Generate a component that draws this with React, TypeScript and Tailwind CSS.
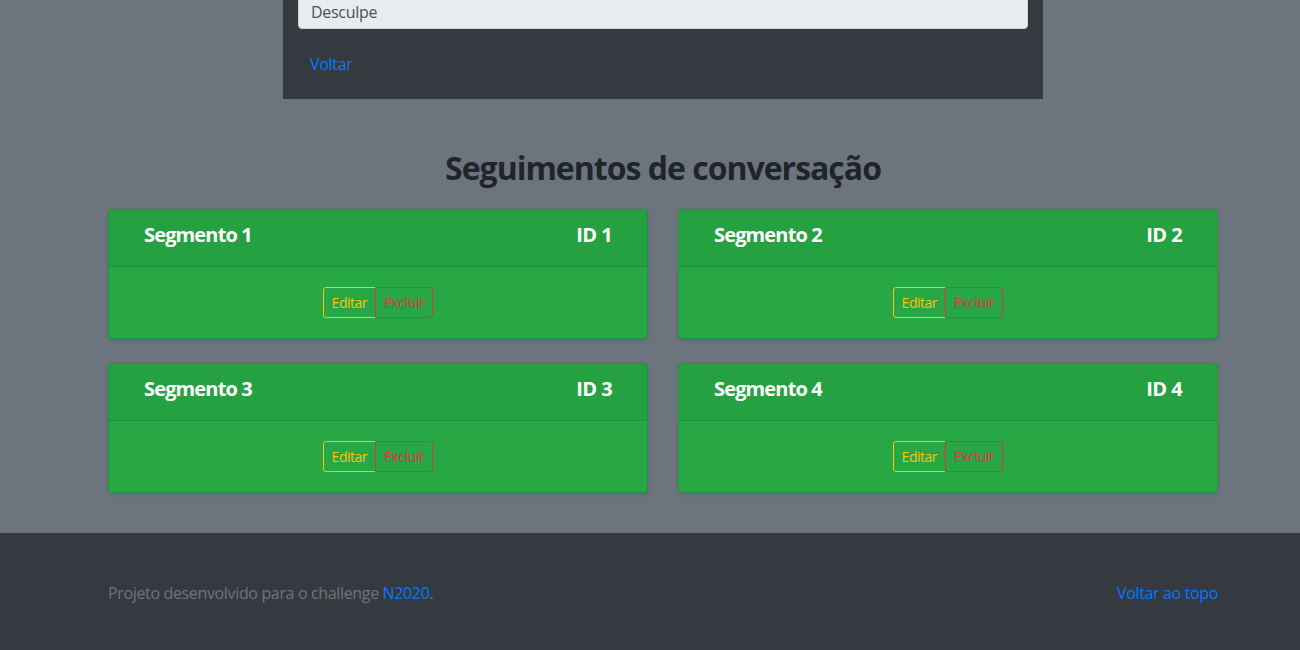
import React from "react"

const segments = [
  { name: "Segmento 1", id: 1 },
  { name: "Segmento 2", id: 2 },
  { name: "Segmento 3", id: 3 },
  { name: "Segmento 4", id: 4 },
]

function SegmentCard({ name, id }: { name: string; id: number }) {
  return (
    <div className="rounded-[4px] border border-black/[.125] bg-[#28a745] shadow-[0_2px_4px_rgba(0,0,0,0.1)]">
      <div className="flex items-start justify-between border-b border-black/[.125] bg-black/[.03] px-[35px] pt-[13px] pb-[11px]">
        <h5 className="mb-[8px] text-[20px] font-bold leading-[24px] tracking-[-0.85px] text-white">{name}</h5>
        <h5 className="mb-[8px] text-[20px] font-bold leading-[24px] tracking-[-0.6px] text-white">ID {id}</h5>
      </div>
      <div className="flex justify-center p-[20px]">
        <div className="flex">
          <button className="rounded-l-[3px] border border-[#ffc107] px-[8px] py-[4px] text-[14px] leading-[21px] tracking-[-0.5px] text-[#ffc107]">
            Editar
          </button>
          <button className="-ml-px rounded-r-[3px] border border-[#dc3545] px-[8px] py-[4px] text-[14px] leading-[21px] tracking-[-0.4px] text-[#dc3545]">
            Excluir
          </button>
        </div>
      </div>
    </div>
  )
}

export default function App() {
  return (
    <div
      className="min-h-[650px] bg-[#6c757d] text-[16px] leading-[24px] text-[#212529]"
      style={{ fontFamily: '"Segoe UI", "Open Sans", "Noto Sans", sans-serif' }}
    >
      <main className="ml-[108px] w-[1110px]">
        {/* top form panel, page is scrolled so it is cut off */}
        <div className="mx-auto -mt-[9px] w-[760px] bg-[#343a40] px-[15px] pb-[17px]">
          <input
            disabled
            value="Desculpe"
            className="block h-[38px] w-full rounded-[4px] border border-[#ced4da] bg-[#e9ecef] px-[12px] pt-[8px] pb-[4px] text-[16px] tracking-[-0.3px] text-[#495057]"
            readOnly
          />
          <a href="#" className="mt-[17px] inline-block px-[12px] py-[6px] tracking-[-0.3px] text-[#007bff]">
            Voltar
          </a>
        </div>

        <h2 className="mt-[50px] text-center text-[32px] font-bold leading-[38px] tracking-[-1px] text-[#212529]">
          Seguimentos de conversação
        </h2>

        <div className="mt-[22px] grid grid-cols-2 gap-x-[30px] gap-y-[24px]">
          {segments.map((s) => (
            <SegmentCard key={s.id} name={s.name} id={s.id} />
          ))}
        </div>
      </main>

      <footer className="mt-[40px] bg-[#343a40] py-[48px] tracking-[-0.35px]">
        <div className="ml-[108px] flex w-[1110px] justify-between">
          <p className="text-[#6c757d]">
            Projeto desenvolvido para o challenge <a href="#" className="text-[#007bff]">N2020</a>.
          </p>
          <a href="#" className="text-[#007bff]">
            Voltar ao topo
          </a>
        </div>
      </footer>
    </div>
  )
}
